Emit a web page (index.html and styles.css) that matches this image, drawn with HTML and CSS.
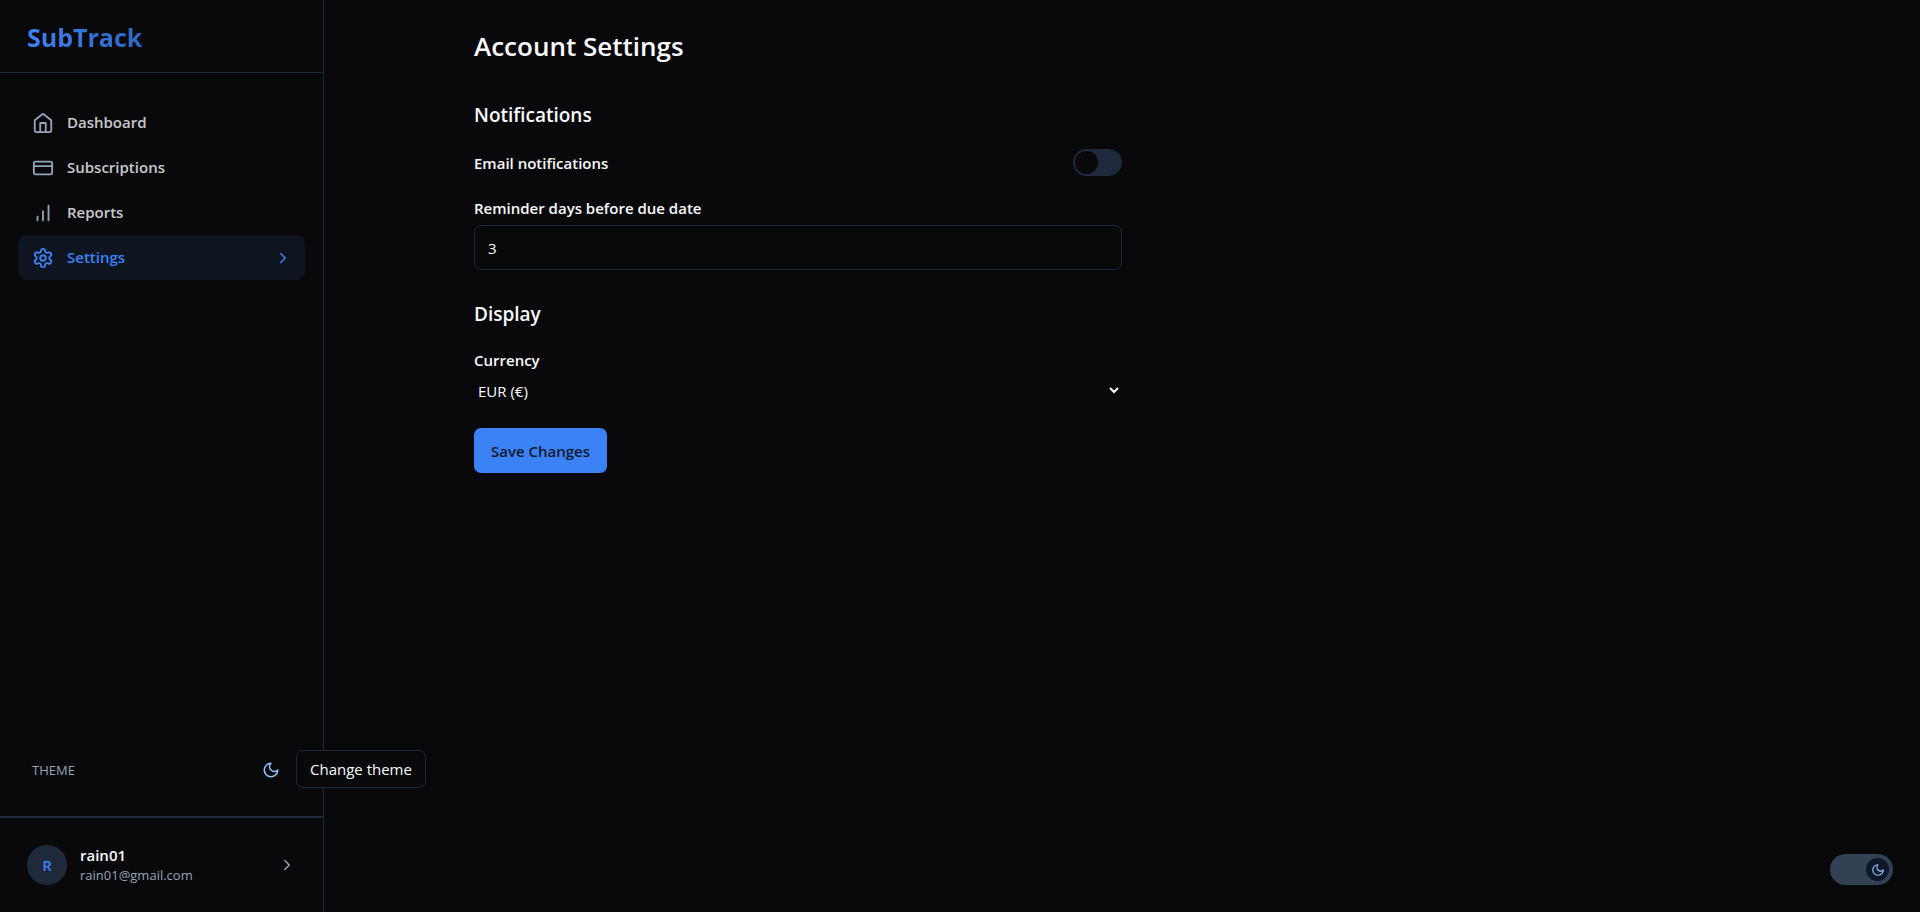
FILE: index.html
```html
<!DOCTYPE html>
<html lang="en">
<head>
<meta charset="utf-8">
<meta name="viewport" content="width=device-width, initial-scale=1">
<title>SubTrack - Account Settings</title>
<link rel="stylesheet" href="styles.css">
</head>
<body>
<div class="app">
  <aside class="sidebar">
    <header class="brand"><a class="brand-link" href="#">SubTrack</a></header>
    <nav class="nav" aria-label="Main">
      <a class="nav-item" href="#dashboard">
        <svg class="icon" viewBox="0 0 24 24"><path d="m3 9 9-7 9 7v11a2 2 0 0 1-2 2H5a2 2 0 0 1-2-2z"/><path d="M9 22V12h6v10"/></svg>
        <span class="nav-label">Dashboard</span>
      </a>
      <a class="nav-item" href="#subscriptions">
        <svg class="icon" viewBox="0 0 24 24"><rect x="2" y="5" width="20" height="14" rx="2"/><path d="M2 10h20"/></svg>
        <span class="nav-label">Subscriptions</span>
      </a>
      <a class="nav-item" href="#reports">
        <svg class="icon" viewBox="0 0 24 24"><path d="M12 20V10M18 20V4M6 20v-4"/></svg>
        <span class="nav-label">Reports</span>
      </a>
      <a class="nav-item active" href="#settings" aria-current="page">
        <svg class="icon" viewBox="0 0 24 24"><path d="M12.22 2h-.44a2 2 0 0 0-2 2v.18a2 2 0 0 1-1 1.73l-.43.25a2 2 0 0 1-2 0l-.15-.08a2 2 0 0 0-2.73.73l-.22.38a2 2 0 0 0 .73 2.73l.15.1a2 2 0 0 1 1 1.72v.51a2 2 0 0 1-1 1.74l-.15.09a2 2 0 0 0-.73 2.73l.22.38a2 2 0 0 0 2.73.73l.15-.08a2 2 0 0 1 2 0l.43.25a2 2 0 0 1 1 1.73V20a2 2 0 0 0 2 2h.44a2 2 0 0 0 2-2v-.18a2 2 0 0 1 1-1.73l.43-.25a2 2 0 0 1 2 0l.15.08a2 2 0 0 0 2.73-.73l.22-.39a2 2 0 0 0-.73-2.73l-.15-.08a2 2 0 0 1-1-1.74v-.5a2 2 0 0 1 1-1.74l.15-.09a2 2 0 0 0 .73-2.73l-.22-.38a2 2 0 0 0-2.73-.73l-.15.08a2 2 0 0 1-2 0l-.43-.25a2 2 0 0 1-1-1.73V4a2 2 0 0 0-2-2z"/><circle cx="12" cy="12" r="3"/></svg>
        <span class="nav-label">Settings</span>
        <svg class="icon icon-sm" viewBox="0 0 24 24"><path d="m9 18 6-6-6-6"/></svg>
      </a>
    </nav>
    <div class="theme-row">
      <span class="theme-label">THEME</span>
      <div class="theme-control">
        <button class="theme-button" type="button" aria-label="Change theme" aria-describedby="theme-tip">
          <svg class="icon icon-sm" viewBox="0 0 24 24"><path d="M12 3a6 6 0 0 0 9 9 9 9 0 1 1-9-9Z"/></svg>
        </button>
        <div class="tooltip" role="tooltip" id="theme-tip">Change theme</div>
      </div>
    </div>
    <footer class="account">
      <button class="account-button" type="button">
        <span class="avatar">R</span>
        <span class="account-text">
          <span class="account-name">rain01</span>
          <span class="account-email">rain01@gmail.com</span>
        </span>
        <svg class="icon icon-sm" viewBox="0 0 24 24"><path d="m9 18 6-6-6-6"/></svg>
      </button>
    </footer>
  </aside>

  <main class="main">
    <div class="container">
      <form class="settings">
        <h1 class="title">Account Settings</h1>
        <section class="section">
          <h2 class="section-title">Notifications</h2>
          <div class="switch-row">
            <label class="label" for="email-notifications">Email notifications</label>
            <input class="switch" type="checkbox" role="switch" id="email-notifications">
          </div>
          <div class="field">
            <label class="label" for="reminder-days">Reminder days before due date</label>
            <input class="input" type="text" inputmode="numeric" id="reminder-days" value="3">
          </div>
        </section>
        <section class="section">
          <h2 class="section-title">Display</h2>
          <div class="field">
            <label class="label" for="currency">Currency</label>
            <select class="select" id="currency">
              <option>EUR (€)</option>
              <option>USD ($)</option>
              <option>GBP (£)</option>
            </select>
          </div>
        </section>
        <button class="save" type="submit">Save Changes</button>
      </form>
    </div>
  </main>
</div>
<button class="mode-toggle" type="button" aria-label="Toggle dark mode">
  <span class="mode-knob"><svg class="icon icon-xs" viewBox="0 0 24 24"><path d="M12 3a6 6 0 0 0 9 9 9 9 0 1 1-9-9Z"/></svg></span>
</button>
</body>
</html>
```

FILE: styles.css
```css
:root {
  --bg: #09090b;
  --line: #1e293b;
  --text: #f8fafc;
  --muted: #94a3b8;
  --blue: #3b82f6;
  --sky: #93c5fd;
}

* { box-sizing: border-box; }

body {
  margin: 0;
  background: var(--bg);
  color: var(--text);
  font-family: "Segoe UI", "Open Sans", "Noto Sans", sans-serif;
  font-size: 15px;
  line-height: 24px;
}

button, input, select { font: inherit; color: inherit; }
button { border: 0; padding: 0; background: none; cursor: pointer; }
a { color: inherit; text-decoration: none; }
h1, h2 { margin: 0; font-weight: 600; }

.app {
  display: grid;
  grid-template-columns: 324px 1fr;
  min-height: 100vh;
}

.icon {
  flex: none;
  width: 22px;
  height: 22px;
  fill: none;
  stroke: currentColor;
  stroke-width: 2;
  stroke-linecap: round;
  stroke-linejoin: round;
}
.icon-sm { width: 18px; height: 18px; }
.icon-xs { width: 14px; height: 14px; }

.sidebar {
  display: flex;
  flex-direction: column;
  border-right: 1px solid var(--line);
}

.brand {
  display: flex;
  align-items: center;
  height: 73px;
  padding: 2px 27px 0;
  border-bottom: 1px solid var(--line);
}
.brand-link {
  font-size: 25px;
  font-weight: 700;
  line-height: 36px;
  color: transparent;
  background: linear-gradient(90deg, #3b82f6, #2f68c4);
  background-clip: text;
  -webkit-background-clip: text;
}

.nav {
  flex: 1;
  display: flex;
  flex-direction: column;
  padding: 27px 18px;
}
.nav-item {
  display: flex;
  align-items: center;
  gap: 13px;
  height: 45px;
  padding: 0 13px 0 14px;
  border-radius: 9px;
  font-weight: 600;
  color: var(--muted);
}
.nav-label { flex: 1; padding-bottom: 2px; color: #c9cacc; }
.nav-item.active { background: #0e1521; }
.nav-item.active, .nav-item.active .nav-label { color: var(--blue); }

.theme-row {
  display: flex;
  align-items: center;
  justify-content: space-between;
  padding: 27px 32px 26px;
}
.theme-label { font-size: 13px; font-weight: 500; color: var(--muted); }
.theme-control { position: relative; display: flex; }
.theme-button {
  display: grid;
  place-items: center;
  width: 41px;
  height: 41px;
  color: var(--sky);
}
.tooltip {
  position: absolute;
  top: 1px;
  left: 100%;
  margin-left: 5px;
  padding: 6px 13px;
  border: 1px solid var(--line);
  border-radius: 7px;
  background: var(--bg);
  white-space: nowrap;
}

.account {
  padding: 27px;
  border-top: 2px solid var(--line);
}
.account-button {
  display: flex;
  align-items: center;
  gap: 13px;
  width: 100%;
  text-align: left;
  color: var(--muted);
}
.avatar {
  display: grid;
  place-items: center;
  width: 40px;
  height: 40px;
  border-radius: 50%;
  background: var(--line);
  color: var(--blue);
  font-weight: 600;
}
.account-text { flex: 1; display: flex; flex-direction: column; line-height: 20px; }
.account-name { font-weight: 600; color: var(--text); }
.account-email { font-size: 13px; }

.main { padding: 28px 36px; }
.container { max-width: 1296px; margin: 0 auto; }
.settings {
  display: flex;
  flex-direction: column;
  gap: 24px;
  max-width: 648px;
}
.title { font-size: 26px; line-height: 36px; margin-bottom: 14px; }
.section { display: flex; flex-direction: column; gap: 20px; }
.section-title { font-size: 19px; line-height: 27px; }
.section + .section { margin-top: 7px; }
.switch-row { display: flex; align-items: center; justify-content: space-between; }
.label { font-weight: 600; }
.field { display: flex; flex-direction: column; gap: 5px; }

.switch {
  appearance: none;
  display: flex;
  width: 49px;
  height: 27px;
  margin: 0;
  padding: 2px;
  border-radius: 14px;
  background: var(--line);
}
.switch::before {
  content: "";
  width: 23px;
  height: 23px;
  border-radius: 50%;
  background: var(--bg);
}
.switch:checked { justify-content: flex-end; background: var(--blue); }

.input {
  width: 100%;
  height: 45px;
  padding: 0 13px;
  border: 1px solid var(--line);
  border-radius: 7px;
  background: transparent;
}
.select {
  width: 100%;
  height: 27px;
  border: 0;
  background-color: var(--bg);
}
.save {
  align-self: flex-start;
  height: 45px;
  padding: 0 17px;
  border-radius: 7px;
  background: var(--blue);
  color: #0f172a;
  font-weight: 600;
}

.mode-toggle {
  position: fixed;
  right: 27px;
  bottom: 27px;
  display: flex;
  align-items: center;
  justify-content: flex-end;
  width: 63px;
  height: 31px;
  padding: 4px;
  border-radius: 16px;
  background: #334155;
}
.mode-knob {
  display: grid;
  place-items: center;
  width: 23px;
  height: 23px;
  border-radius: 50%;
  background: #0f172a;
  color: var(--sky);
}
```
